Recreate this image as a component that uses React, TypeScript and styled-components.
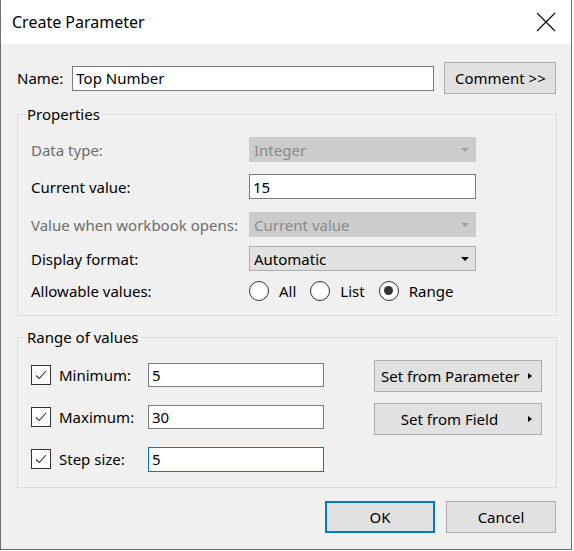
import React from "react";
import styled, { createGlobalStyle } from "styled-components";

const Global = createGlobalStyle`
  html, body { margin: 0; padding: 0; background: #ffffff; }
  body { font-family: "Noto Sans", "Segoe UI", sans-serif; color: #000; }
  * { box-sizing: border-box; }
`;

const Window = styled.div`
  width: 572px;
  height: 550px;
  border: 1px solid #6e6e6e;
  border-top: none;
  background: #f0f0f0;
  display: flex;
  flex-direction: column;
`;

const TitleBar = styled.div`
  height: 44px;
  background: #ffffff;
  display: flex;
  align-items: center;
  justify-content: space-between;
  padding-left: 11px;
  font-size: 16px;
`;

const CloseBox = styled.div`
  width: 50px;
  height: 44px;
  display: flex;
  align-items: center;
  justify-content: center;
`;

const Body = styled.div`
  flex: 1;
  padding: 18px 14px 0 16px;
  display: flex;
  flex-direction: column;
  font-size: 15px;
`;

const NameRow = styled.div`
  display: flex;
  align-items: center;
  height: 32px;
  gap: 9px;
`;

const Label = styled.span<{ $disabled?: boolean; $w?: number }>`
  color: ${(p) => (p.$disabled ? "#6d6d6d" : "#000")};
  width: ${(p) => (p.$w ? `${p.$w}px` : "auto")};
  flex-shrink: 0;
  white-space: nowrap;
`;

const TextBox = styled.div<{ $w: number; $h?: number; $focus?: boolean }>`
  width: ${(p) => p.$w}px;
  height: ${(p) => p.$h ?? 25}px;
  background: #ffffff;
  border: 1px solid ${(p) => (p.$focus ? "#0078d7" : "#7a7a7a")};
  display: flex;
  align-items: center;
  padding-left: 3px;
  white-space: nowrap;
`;

const Button = styled.div<{ $w: number; $default?: boolean }>`
  width: ${(p) => p.$w}px;
  height: 32px;
  background: #e1e1e1;
  border: ${(p) => (p.$default ? "2px solid #0078d7" : "1px solid #adadad")};
  display: flex;
  align-items: center;
  justify-content: center;
  white-space: nowrap;
`;

const MenuButton = styled(Button)`
  justify-content: flex-start;
  padding-left: 6px;
`;

const ButtonText = styled.span<{ $center?: boolean }>`
  flex: 1;
  text-align: ${(p) => (p.$center ? "center" : "left")};
  padding-right: ${(p) => (p.$center ? "6px" : "0")};
`;

const Arrow = styled.span`
  width: 0;
  height: 0;
  border-top: 3px solid transparent;
  border-bottom: 3px solid transparent;
  border-left: 4px solid #000;
  margin-right: 9px;
  margin-left: 4px;
`;

const Group = styled.fieldset<{ $h: number; $mt: number }>`
  margin: ${(p) => p.$mt}px 0 0 0;
  width: 540px;
  height: ${(p) => p.$h}px;
  border: 1px solid #dcdcdc;
  padding: 0 0 0 13px;
  min-width: 0;
`;

const Legend = styled.legend`
  padding: 0 2px;
  margin-left: -6px;
  line-height: 20px;
  font-size: 15px;
`;

const PropRow = styled.div<{ $mt: number }>`
  display: flex;
  align-items: center;
  height: 25px;
  margin-top: ${(p) => p.$mt}px;
`;

const Select = styled.div<{ $disabled?: boolean }>`
  width: 227px;
  height: 25px;
  background: ${(p) => (p.$disabled ? "#cccccc" : "#e1e1e1")};
  border: 1px solid ${(p) => (p.$disabled ? "#cccccc" : "#adadad")};
  color: ${(p) => (p.$disabled ? "#8a8a8a" : "#000")};
  display: flex;
  align-items: center;
  justify-content: space-between;
  padding: 0 0 0 4px;
`;

const Caret = styled.span<{ $disabled?: boolean }>`
  width: 0;
  height: 0;
  border-left: 4px solid transparent;
  border-right: 4px solid transparent;
  border-top: 4px solid ${(p) => (p.$disabled ? "#a0a0a0" : "#000")};
  margin-right: 6px;
`;

const RadioGroup = styled.div`
  display: flex;
  align-items: center;
`;

const RadioItem = styled.div<{ $gap: number }>`
  display: flex;
  align-items: center;
  margin-right: ${(p) => p.$gap}px;
`;

const RadioCircle = styled.span<{ $on?: boolean }>`
  width: 20px;
  height: 20px;
  border-radius: 50%;
  border: 1px solid #333;
  background: #fff;
  margin-right: 10px;
  display: flex;
  align-items: center;
  justify-content: center;
  &::after {
    content: "";
    width: 9px;
    height: 9px;
    border-radius: 50%;
    background: #333;
    display: ${(p) => (p.$on ? "block" : "none")};
  }
`;

const RangeBody = styled.div`
  display: flex;
  justify-content: space-between;
  padding-right: 14px;
`;

const RangeCol = styled.div<{ $pt: number; $gap: number }>`
  display: flex;
  flex-direction: column;
  padding-top: ${(p) => p.$pt}px;
  gap: ${(p) => p.$gap}px;
`;

const CheckRow = styled.div`
  display: flex;
  align-items: center;
  height: 24px;
`;

const CheckBox = styled.span`
  width: 20px;
  height: 20px;
  border: 1px solid #333;
  background: #fff;
  margin-right: 8px;
  display: flex;
  align-items: center;
  justify-content: center;
`;

const Footer = styled.div`
  display: flex;
  justify-content: flex-end;
  gap: 11px;
  margin-top: 13px;
  padding-right: 1px;
`;

const Check = () => (
  <svg width="16" height="16" viewBox="0 0 16 16">
    <path d="M3 8.5 L6.3 11.5 L13 4" fill="none" stroke="#333" strokeWidth="1.1" />
  </svg>
);

export default function App() {
  return (
    <>
      <Global />
      <Window>
        <TitleBar>
          <span>Create Parameter</span>
          <CloseBox>
            <svg width="20" height="20" viewBox="0 0 20 20">
              <path d="M1 1 L19 19 M19 1 L1 19" stroke="#000" strokeWidth="1.1" />
            </svg>
          </CloseBox>
        </TitleBar>
        <Body>
          <NameRow>
            <Label>Name:</Label>
            <TextBox $w={362}>Top Number</TextBox>
            <Button $w={112} style={{ marginLeft: 1 }}>Comment &gt;&gt;</Button>
          </NameRow>

          <Group $h={212} $mt={10}>
            <Legend>Properties</Legend>
            <PropRow $mt={13}>
              <Label $disabled $w={218}>Data type:</Label>
              <Select $disabled>
                <span>Integer</span>
                <Caret $disabled />
              </Select>
            </PropRow>
            <PropRow $mt={12}>
              <Label $w={218}>Current value:</Label>
              <TextBox $w={227}>15</TextBox>
            </PropRow>
            <PropRow $mt={13}>
              <Label $disabled $w={218}>Value when workbook opens:</Label>
              <Select $disabled>
                <span>Current value</span>
                <Caret $disabled />
              </Select>
            </PropRow>
            <PropRow $mt={9}>
              <Label $w={218}>Display format:</Label>
              <Select>
                <span>Automatic</span>
                <Caret />
              </Select>
            </PropRow>
            <PropRow $mt={7}>
              <Label $w={218}>Allowable values:</Label>
              <RadioGroup>
                <RadioItem $gap={14}>
                  <RadioCircle />
                  <span>All</span>
                </RadioItem>
                <RadioItem $gap={14}>
                  <RadioCircle />
                  <span>List</span>
                </RadioItem>
                <RadioItem $gap={0}>
                  <RadioCircle $on />
                  <span>Range</span>
                </RadioItem>
              </RadioGroup>
            </PropRow>
          </Group>

          <Group $h={161} $mt={11}>
            <Legend>Range of values</Legend>
            <RangeBody>
              <RangeCol $pt={16} $gap={18}>
                <CheckRow>
                  <CheckBox><Check /></CheckBox>
                  <Label $w={89}>Minimum:</Label>
                  <TextBox $w={176} $h={24}>5</TextBox>
                </CheckRow>
                <CheckRow>
                  <CheckBox><Check /></CheckBox>
                  <Label $w={89}>Maximum:</Label>
                  <TextBox $w={176} $h={24}>30</TextBox>
                </CheckRow>
                <CheckRow>
                  <CheckBox><Check /></CheckBox>
                  <Label $w={89}>Step size:</Label>
                  <TextBox $w={176} $h={25} $focus>5</TextBox>
                </CheckRow>
              </RangeCol>
              <RangeCol $pt={13} $gap={11}>
                <MenuButton $w={168}>
                  <ButtonText>Set from Parameter</ButtonText>
                  <Arrow />
                </MenuButton>
                <MenuButton $w={168}>
                  <ButtonText $center>Set from Field</ButtonText>
                  <Arrow />
                </MenuButton>
              </RangeCol>
            </RangeBody>
          </Group>

          <Footer>
            <Button $w={110} $default>OK</Button>
            <Button $w={110}>Cancel</Button>
          </Footer>
        </Body>
      </Window>
    </>
  );
}
